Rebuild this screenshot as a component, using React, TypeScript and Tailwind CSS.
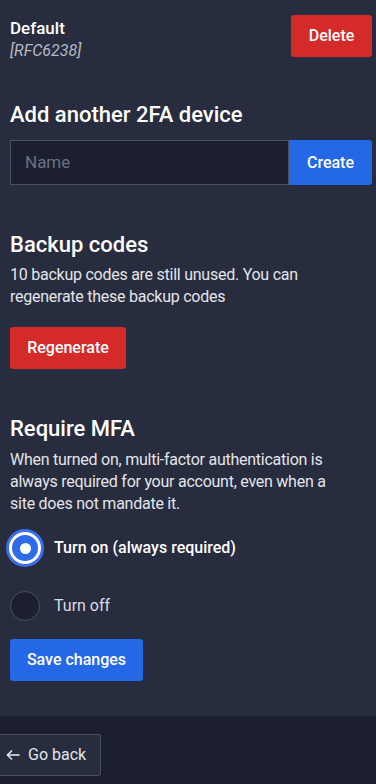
export default function App() {
    return (
        <div
            className="w-[376px] min-h-[784px] flex flex-col bg-[#272c3e] text-white"
            style={{ fontFamily: "Roboto, 'Noto Sans', sans-serif" }}
        >
            <main className="pl-[10px] pr-[4px] pt-[15px] pb-[35px]">
                <div className="flex justify-between items-start h-[42px]">
                    <div className="pt-[2px]">
                        <div className="text-[17px] font-medium leading-[22px]">Default</div>
                        <div className="text-[16px] italic text-[#b5b9c4] leading-[24px]">[RFC6238]</div>
                    </div>
                    <button className="h-[42px] w-[81px] rounded-[3px] bg-[#d42a2a] text-[16px] font-medium">
                        Delete
                    </button>
                </div>

                <h2 className="mt-[43px] text-[22px] font-medium leading-[30px]">Add another 2FA device</h2>
                <div className="mt-[10px] flex h-[45px]">
                    <input
                        placeholder="Name"
                        className="flex-1 min-w-0 bg-[#1b1f30] border border-[#4a5062] px-[14px] text-[17px] text-white placeholder:text-[#6b7284] outline-none"
                    />
                    <button className="w-[83px] bg-[#2468e6] rounded-r-[3px] text-[16px] font-medium">Create</button>
                </div>

                <h2 className="mt-[45px] text-[22px] font-medium leading-[30px]">Backup codes</h2>
                <p className="mt-[4px] text-[16px] leading-[22px] tracking-[-0.25px] text-[#e3e5ea] pr-[30px]">
                    10 backup codes are still unused. You can regenerate these backup codes
                </p>
                <button className="mt-[19px] h-[42px] w-[116px] rounded-[3px] bg-[#d42a2a] text-[16px] font-medium">
                    Regenerate
                </button>

                <h2 className="mt-[45px] text-[22px] font-medium leading-[30px]">Require MFA</h2>
                <p className="mt-[5px] text-[16px] leading-[22px] tracking-[-0.25px] text-[#e3e5ea] pr-[30px]">
                    When turned on, multi-factor authentication is always required for your account, even when a site does not mandate it.
                </p>

                <div className="mt-[14px] flex flex-col">
                    <label className="flex items-center h-[38px]">
                        <span className="ml-[-4px] w-[38px] h-[38px] rounded-full bg-[#3b6ff0] flex items-center justify-center">
                            <span className="w-[32px] h-[32px] rounded-full border-[3px] border-white bg-[#2e6be6] flex items-center justify-center">
                                <span className="w-[11px] h-[11px] rounded-full bg-white" />
                            </span>
                        </span>
                        <span className="ml-[10px] text-[16px] font-medium">Turn on (always required)</span>
                    </label>
                    <label className="mt-[23px] flex items-center h-[32px]">
                        <span className="w-[30px] h-[30px] rounded-full bg-[#1b1f30] border border-[#4a5062]" />
                        <span className="ml-[14px] text-[16px] text-[#d8dbe2]">Turn off</span>
                    </label>
                </div>

                <button className="mt-[17px] h-[42px] w-[133px] rounded-[3px] bg-[#2468e6] text-[16px] font-medium">
                    Save changes
                </button>
            </main>
            <footer className="flex-1 bg-[#1b1f2f] pt-[18px] pb-[8px]">
                <button className="h-[42px] w-[101px] rounded-r-[3px] border border-l-0 border-[#4a5062] bg-[#272c3e] text-[16px] flex items-center pl-[6px] gap-[8px] text-[#e3e5ea]">
                    <svg width="14" height="12" viewBox="0 0 14 12" fill="none" stroke="currentColor" strokeWidth="1.6">
                        <path d="M13.5 6H1.5" />
                        <path d="M6 1.5L1.5 6L6 10.5" />
                    </svg>
                    <span>Go back</span>
                </button>
            </footer>
        </div>
    );
}
